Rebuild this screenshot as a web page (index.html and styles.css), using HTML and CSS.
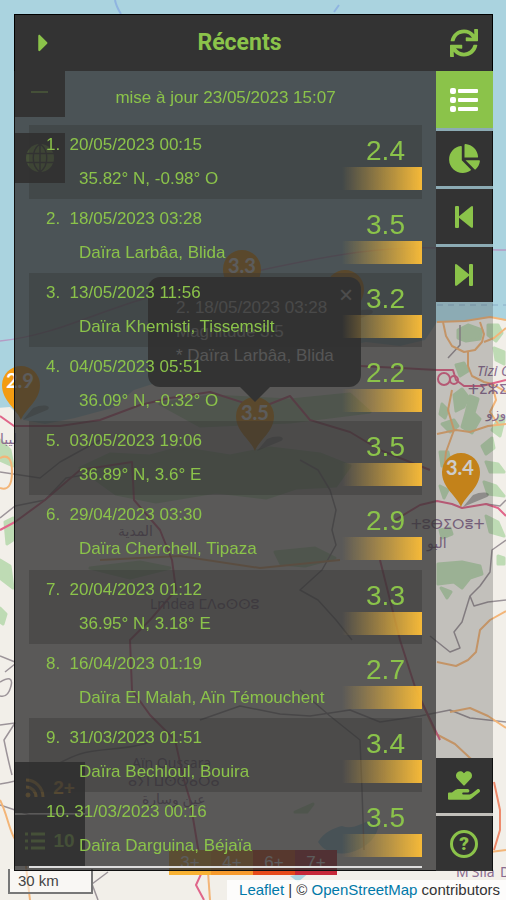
FILE: index.html
```html
<!DOCTYPE html>
<html lang="fr">
<head>
    <meta charset="UTF-8">
    <meta name="viewport" content="width=device-width, initial-scale=1.0">
    <title>Récents</title>
    <link rel="stylesheet" href="styles.css">
</head>
<body>
    <!-- Map background -->
    <div class="map">
        <svg class="map-canvas" viewBox="0 0 506 900" preserveAspectRatio="xMidYMid slice" aria-hidden="true">
            <defs>
                <g id="pin">
                    <path d="M2 0 L26 -10 C32 -14 22 -17 12 -12 Z" fill="#444" opacity=".4"/>
                    <path d="M0 0 C-4 -11 -19 -19 -19 -35 A19 19 0 0 1 19 -35 C19 -19 4 -11 0 0 Z" fill="#f39c12"/>
                </g>
            </defs>
            <rect width="506" height="900" fill="#aad3df"/>
            <path d="M-5 408 L10 407 L24 420 L45 424 L75 418 L112 408 L134 390 L165 380 L200 362 L260 347 L330 349 L366 342 L400 346 L425 340 L437 322 L465 321 L490 317 L511 322 V905 H-5 Z" fill="#f2efe9"/>

            <!-- Forests -->
            <g fill="#b5d8ab" stroke="#b5d8ab" stroke-width="3" stroke-linejoin="round" opacity=".85">
                <path d="M458 330 l10 -5 l14 5 l-2 9 l-14 2 l-8 -3z"/>
                <path d="M488 325 l10 0 l4 8 l-6 8 l-8 -6z"/>
                <path d="M494 348 l10 4 v12 l-8 -4z"/>
                <path d="M456 365 l8 -2 l4 8 l-8 5z"/>
                <path d="M454 395 l8 -6 l6 8 l-4 10 l-8 4z"/>
                <path d="M470 396 l8 3 l-4 14 l6 6 l-8 14 l-10 -6 l4 -14z"/>
                <path d="M442 404 l6 6 l-3 8 l-5 -4z"/>
                <path d="M442 424 l12 -4 l4 6 l-8 6z"/>
                <path d="M492 430 l8 -14 l4 4 l-4 16z"/>
                <path d="M482 446 l10 -8 l2 10 l-8 6z"/>
                <path d="M440 452 l8 0 l2 10 l-8 4z"/>
                <path d="M486 462 l12 2 l6 8 l-14 0z"/>
                <path d="M484 482 l12 4 l8 10 l-16 -2z"/>
                <path d="M440 486 l8 4 l-4 8z"/>
                <path d="M486 516 l12 6 l6 14 l-14 -4z"/>
                <path d="M440 530 l10 -2 l2 6 l-10 4z"/>
                <path d="M438 564 l24 -2 l18 4 l2 8 l-12 4 l-8 10 l-8 -6 l-16 2z"/>
                <path d="M441 588 l10 4 l-4 6z"/>
                <path d="M498 556 l6 2 v6 l-6 0z"/>
                <path d="M0 440 l10 10 l3 16 l-13 -6z"/>
                <path d="M5 522 l8 -4 l0 22 l-6 4z"/>
                <path d="M0 560 l10 6 l3 22 l-13 -10z"/>
                <path d="M0 608 l6 6 l-3 10 l-3 -2z"/>
                <path d="M80 468 l30 -14 l40 2 l30 -8 l50 8 l40 -8 l50 6 l30 12 l-14 20 l-40 2 l-30 10 l-50 -6 l-60 10 l-40 -8z"/>
                <path d="M160 404 l50 -8 l80 4 l60 -6 l20 18 l-80 10 l-90 4z"/>
                <path d="M275 552 l40 -4 l20 10 l-30 8 l-24 -2z"/>
                <path d="M90 568 l50 -6 l30 6 l-40 10z"/>
                <path d="M295 812 l18 -8 l-6 8z"/>
            </g>
            <path d="M318 842 C324 832 334 828 342 826 C352 830 362 824 378 816 C382 830 372 846 352 852 C338 856 324 852 318 842 Z" fill="#9ccbe0"/>
            <path d="M290 876 l20 -4 l-12 10z" fill="#aad3df"/>
            <path d="M115 0 q1 6 6 14 M334 12 l5 -7" fill="none" stroke="#8fb4e0" stroke-width="2"/>
            <path d="M437 305 H506" stroke="#8aaec8" stroke-dasharray="6 5"/>

            <!-- Borders and minor roads -->
            <g fill="none" stroke="#9c9499" stroke-width="1.5" stroke-linejoin="round">
                <path d="M0 341 C50 336 90 315 140 300 S300 260 360 252 S460 250 506 250" stroke="#b59bc4"/>
                <path d="M0 472 L40 478 L60 462 L100 440"/>
                <path d="M0 518 L15 506 L45 500 L66 478 L90 474"/>
                <path d="M506 540 L492 550 L490 572 L480 586 L470 596 L462 622 L454 632 L460 648 L450 652 L430 636"/>
                <path d="M470 596 L474 606 L488 602 L506 600"/>
                <path d="M300 460 L318 470 L330 490 L336 510 L332 530 L336 545 L322 570 L300 590 L318 600 L336 620 L352 640"/>
                <path d="M15 664 L5 672 M0 656 L15 662"/>
                <path d="M0 682 Q14 674 11 686 T0 696"/>
                <path d="M0 725 L15 723 L4 740 Q8 760 12 775"/>
                <path d="M0 784 C40 778 60 760 80 754 S130 750 150 742"/>
                <path d="M0 805 L30 815 L90 815"/>
                <path d="M200 720 L240 706 L280 714 L310 716 L350 710 L380 722 L420 716 L450 710 L470 718 L506 722"/>
                <path d="M300 690 L330 716 L360 740 L362 790 L364 850"/>
                <path d="M108 872 L92 884 L98 900"/>
                <path d="M460 325 L460 345 L448 358"/>
                <path d="M486 504 L500 506 L506 500"/>
            </g>

            <!-- Main roads -->
            <g fill="none" stroke="#f3b578" stroke-width="2" stroke-linejoin="round">
                <path d="M443 322 L446 336 L452 346 L464 352 L475 350 L482 342 L484 334 L480 322"/>
                <path d="M437 322 L465 321 L490 317 L506 320"/>
                <path d="M484 342 L494 338 L506 328"/>
                <path d="M468 352 L468 366 L472 376 L484 382 L492 384 L506 392"/>
                <path d="M437 434 L456 430 L470 432 L488 426 L506 424"/>
                <path d="M452 390 L448 410 L454 430 L446 452 L444 470"/>
                <path d="M492 384 L496 400 L490 412 L498 424"/>
                <path d="M437 662 L456 666 L468 660 L476 652 L480 630 L490 620 L506 611"/>
                <path d="M421 700 L436 734 L455 744 L470 758 L478 764"/>
                <path d="M450 712 L470 708 L488 716 L506 728"/>
                <path d="M0 458 Q12 452 12 472 T0 488"/>
                <path d="M0 800 C10 820 8 836 24 850 L30 900"/>
                <path d="M100 560 L180 556 L260 568 L340 560"/>
                <path d="M208 872 L210 900"/>
                <path d="M490 852 L506 850"/>
            </g>
            <g fill="none" stroke="#e0668a" stroke-width="2" stroke-linejoin="round">
                <path d="M0 416 L14 426 L60 426 L100 420 L140 405 L170 398 L210 392 L260 408 L290 396 L310 420 L350 432 L380 450 L430 470"/>
                <path d="M360 366 L400 368 L437 370 L453 370 L456 380 L464 386 L482 386 L506 380"/>
                <circle cx="444" cy="379" r="6"/>
                <circle cx="454" cy="380" r="4"/>
                <path d="M0 530 L15 522 L45 500 L80 470 L132 462 L134 500 L160 530 L172 560 L176 590 L150 620 L130 640 L132 690 L150 715 L175 740 L184 780 L190 800 L202 872 L196 885 L204 900"/>
                <path d="M395 520 L420 505 L437 501 L452 504 L462 508 L486 504 L498 508 L506 516"/>
                <path d="M380 560 L400 640 L416 690 L440 740"/>
                <path d="M494 782 L500 810 L500 830 L494 850" stroke="#ee8a6c"/>
            </g>

            <!-- Place names -->
            <g class="place">
                <text x="477" y="376" font-style="italic">Tizi Ouzou</text>
                <text x="468" y="394">ⵜⵉⵣⵉ ⵡⵓⵣⵓ</text>
                <text x="486" y="418">وزو</text>
                <text x="411" y="529">ⵜⵓⴱⵉⵔⴻⵜ</text>
                <text x="427" y="548">البو</text>
                <text x="118" y="536">المدية</text>
                <text x="150" y="609">Lmdea ⵎⴷⴰⵙⵙⵓ</text>
                <text x="132" y="768">Aïn Oussara</text>
                <text x="128" y="786">ⴰⵢⵏ ⵡⵙⵙⴰⵔⴰ</text>
                <text x="142" y="804">عين وسارة</text>
                <text x="456" y="877">M'Sila</text>
                <text x="500" y="877">D</text>
                <text x="0" y="444">ليبا</text>
            </g>

            <!-- Earthquakes -->
            <g class="pin-label">
                <use href="#pin" x="242" y="304"/><text x="242" y="273">3.3</text>
                <use href="#pin" x="345" y="324"/>
                <use href="#pin" x="21" y="420"/><text x="20" y="388">2.9</text>
                <use href="#pin" x="461" y="507"/><text x="460" y="475">3.4</text>
                <use href="#pin" x="255" y="451"/><text x="255" y="420">3.5</text>
            </g>
        </svg>

        <div class="map-tools">
            <button class="tool" aria-label="Zoom arrière">
                <svg width="18" height="18" viewBox="0 0 18 18"><path d="M0 9h17" stroke="currentColor" stroke-width="2"/></svg>
            </button>
            <button class="tool" aria-label="Fond de carte">
                <svg width="28" height="28" viewBox="0 0 28 28">
                    <circle cx="14" cy="14" r="14" fill="currentColor"/>
                    <path d="M0 9.500h28M0 18.500h28M14 0v28M14 0c-9 6-9 22 0 28M14 0c9 6 9 22 0 28" fill="none" stroke="#333" stroke-width="1.500"/>
                </svg>
            </button>
            <button class="tool tool-wide tool-feed">
                <svg width="20" height="20" viewBox="0 0 20 20" fill="none" stroke="currentColor" stroke-width="3">
                    <circle cx="3" cy="17" r="2" fill="currentColor" stroke-width="1"/>
                    <path d="M1 9a10 10 0 0 1 10 10M1 2a17 17 0 0 1 17 17"/>
                </svg>
                2+
            </button>
            <button class="tool tool-wide">
                <svg width="20" height="18" viewBox="0 0 20 18" stroke="currentColor" stroke-width="3"><path d="M0 2h3M6 2h14M0 9h3M6 9h14M0 16h3M6 16h14"/></svg>
                10
            </button>
        </div>

        <div class="popup">
            <button class="popup-close" aria-label="Fermer">×</button>
            <p>2. 18/05/2023 03:28</p>
            <p>Magnitude 3.5</p>
            <p>* Daïra Larbâa, Blida</p>
        </div>

        <div class="legend">
            <span class="mag-3">3+</span>
            <span class="mag-4">4+</span>
            <span class="mag-6">6+</span>
            <span class="mag-7">7+</span>
        </div>

        <div class="scale">30 km</div>
        <div class="attribution"><a href="#">Leaflet</a> | © <a href="#">OpenStreetMap</a> contributors</div>
    </div>

    <!-- Side panel -->
    <main class="panel">
        <header class="panel-header">
            <button class="icon-btn" aria-label="Replier">
                <svg width="11" height="28" viewBox="0 0 192 512" fill="currentColor"><path d="M0 384.662V127.338c0-17.818 21.543-26.741 34.142-14.142l128.662 128.662c7.810 7.810 7.810 20.474 0 28.284L34.142 398.804C21.543 411.404 0 402.480 0 384.662z"/></svg>
            </button>
            <h1>Récents</h1>
            <button class="icon-btn" aria-label="Actualiser">
                <svg width="28" height="28" viewBox="0 0 512 512" fill="currentColor"><path d="M440.65 12.57l4 82.77A247.16 247.16 0 0 0 255.83 8C134.73 8 33.91 94.92 12.29 209.82A12 12 0 0 0 24.09 224h49.05a12 12 0 0 0 11.67-9.26 175.91 175.91 0 0 1 317-56.94l-101.46-4.86a12 12 0 0 0-12.57 12v47.41a12 12 0 0 0 12 12H500a12 12 0 0 0 12-12V12a12 12 0 0 0-12-12h-47.37a12 12 0 0 0-11.98 12.57zM255.83 432a175.61 175.61 0 0 1-146-77.8l101.8 4.87a12 12 0 0 0 12.57-12v-47.4a12 12 0 0 0-12-12H12a12 12 0 0 0-12 12V500a12 12 0 0 0 12 12h47.35a12 12 0 0 0 12-12.6l-4.15-82.57A247.17 247.17 0 0 0 255.83 504c121.11 0 221.93-86.92 243.55-201.82a12 12 0 0 0-11.8-14.18h-49.05a12 12 0 0 0-11.67 9.26A175.86 175.86 0 0 1 255.83 432z"/></svg>
            </button>
        </header>

        <div class="panel-body">
            <section class="sheet">
                <p class="updated">mise à jour 23/05/2023 15:07</p>
                <ol class="quakes">
                    <li class="quake">
                        <div class="quake-info"><p>1.&nbsp; 20/05/2023 00:15</p><p class="quake-place">35.82° N, -0.98° O</p></div>
                        <div class="quake-mag">2.4</div>
                    </li>
                    <li class="quake">
                        <div class="quake-info"><p>2.&nbsp; 18/05/2023 03:28</p><p class="quake-place">Daïra Larbâa, Blida</p></div>
                        <div class="quake-mag">3.5</div>
                    </li>
                    <li class="quake">
                        <div class="quake-info"><p>3.&nbsp; 13/05/2023 11:56</p><p class="quake-place">Daïra Khemisti, Tissemsilt</p></div>
                        <div class="quake-mag">3.2</div>
                    </li>
                    <li class="quake">
                        <div class="quake-info"><p>4.&nbsp; 04/05/2023 05:51</p><p class="quake-place">36.09° N, -0.32° O</p></div>
                        <div class="quake-mag">2.2</div>
                    </li>
                    <li class="quake">
                        <div class="quake-info"><p>5.&nbsp; 03/05/2023 19:06</p><p class="quake-place">36.89° N, 3.6° E</p></div>
                        <div class="quake-mag">3.5</div>
                    </li>
                    <li class="quake">
                        <div class="quake-info"><p>6.&nbsp; 29/04/2023 03:30</p><p class="quake-place">Daïra Cherchell, Tipaza</p></div>
                        <div class="quake-mag">2.9</div>
                    </li>
                    <li class="quake">
                        <div class="quake-info"><p>7.&nbsp; 20/04/2023 01:12</p><p class="quake-place">36.95° N, 3.18° E</p></div>
                        <div class="quake-mag">3.3</div>
                    </li>
                    <li class="quake">
                        <div class="quake-info"><p>8.&nbsp; 16/04/2023 01:19</p><p class="quake-place">Daïra El Malah, Aïn Témouchent</p></div>
                        <div class="quake-mag">2.7</div>
                    </li>
                    <li class="quake">
                        <div class="quake-info"><p>9.&nbsp; 31/03/2023 01:51</p><p class="quake-place">Daïra Bechloul, Bouira</p></div>
                        <div class="quake-mag">3.4</div>
                    </li>
                    <li class="quake">
                        <div class="quake-info"><p>10. 31/03/2023 00:16</p><p class="quake-place">Daïra Darguina, Béjaïa</p></div>
                        <div class="quake-mag">3.5</div>
                    </li>
                </ol>
            </section>

            <nav class="rail">
                <button class="rail-btn active" aria-label="Liste">
                    <svg width="28" height="24" viewBox="0 0 28 24" fill="currentColor">
                        <rect width="6" height="6" rx="2"/><rect x="8" y="1" width="20" height="4" rx="1"/>
                        <rect y="9" width="6" height="6" rx="2"/><rect x="8" y="10" width="20" height="4" rx="1"/>
                        <rect y="18" width="6" height="6" rx="2"/><rect x="8" y="19" width="20" height="4" rx="1"/>
                    </svg>
                </button>
                <button class="rail-btn" aria-label="Statistiques">
                    <svg width="31" height="29" viewBox="0 0 544 512" fill="currentColor"><path d="M527.79 288H290.5l158.03 158.03c6.04 6.04 15.98 6.53 22.19.68 38.7-36.46 65.32-85.61 73.13-140.86 1.34-9.46-6.51-17.85-16.06-17.85zm-15.83-64.8C503.72 103.74 408.26 8.28 288.8.04 279.68-.59 272 7.1 272 16.24V240h223.77c9.14 0 16.82-7.68 16.19-16.8zM224 288V50.71c0-9.55-8.39-17.4-17.84-16.06C86.99 51.49-4.1 155.6.14 280.37 4.5 408.51 114.83 513.59 243.03 511.98c50.4-.63 96.97-16.87 135.26-44.03 7.9-5.6 8.42-17.23 1.57-24.08L224 288z"/></svg>
                </button>
                <button class="rail-btn" aria-label="Précédent">
                    <svg width="18" height="22" viewBox="0 0 18 22" fill="currentColor"><rect width="4" height="22" rx="1"/><path d="M16 .4 4 10.200q-1 .8 0 1.600L16 21.600q2 1 2-1V1.400q0-2-2-1z"/></svg>
                </button>
                <button class="rail-btn" aria-label="Suivant">
                    <svg width="18" height="22" viewBox="0 0 18 22" fill="currentColor"><rect x="14" width="4" height="22" rx="1"/><path d="M2 .4 14 10.200q1 .8 0 1.600L2 21.600q-2 1-2-1V1.400q0-2 2-1z"/></svg>
                </button>
                <button class="rail-btn rail-bottom" aria-label="Faire un don">
                    <svg width="32" height="29" viewBox="0 0 576 512" fill="currentColor"><path d="M275.3 250.5c7 7.4 18.4 7.4 25.5 0l108.9-114.2c31.6-33.2 29.8-88.2-5.6-118.8-30.8-26.7-76.7-21.9-104.9 7.7L288 36.9l-11.1-11.6C248.7-4.4 202.8-9.2 172 17.5c-35.3 30.6-37.2 85.6-5.6 118.8l108.9 114.2zm290 77.6c-11.8-10.7-30.2-10-42.6 0L430.3 402c-11.3 9.1-25.4 14-40 14H272c-8.8 0-16-7.2-16-16s7.2-16 16-16h78.3c15.9 0 30.7-10.9 33.3-26.6 3.3-20-12.1-37.4-31.6-37.4H192c-27 0-53.1 9.3-74.1 26.3L71.4 384H16c-8.8 0-16 7.2-16 16v96c0 8.8 7.2 16 16 16h356.8c14.5 0 28.6-4.9 40-14L564 377c15.2-12.1 16.4-35.3 1.3-48.9z"/></svg>
                </button>
                <button class="rail-btn" aria-label="Aide"><span class="help">?</span></button>
            </nav>
        </div>
    </main>
</body>
</html>
```

FILE: styles.css
```css
/* Reset some default styles */
* {
    margin: 0;
    padding: 0;
    box-sizing: border-box;
}

body {
    font-family: "Liberation Sans", Arial, sans-serif;
    font-size: 17px;
    line-height: 20px;
    color: #8bc34a;
}

button {
    border: none;
    background-color: #333;
    color: #8bc34a;
    font: inherit;
    cursor: pointer;
    display: flex;
    justify-content: center;
    align-items: center;
}

/* Map */
.map {
    position: fixed;
    inset: 0;
    overflow: hidden;
}

.map-canvas {
    position: absolute;
    width: 100%;
    height: 100%;
}

.place {
    fill: #8a6c90;
    font-family: "Noto Sans", "DejaVu Sans", sans-serif;
    font-size: 14px;
}

.pin-label {
    fill: #fff;
    font-family: Lato, sans-serif;
    font-size: 20px;
    font-weight: bold;
    text-anchor: middle;
}

/* Map buttons */
.map-tools {
    position: relative;
    height: 100%;
    padding: 67px 15px 34px;
    display: flex;
    flex-direction: column;
    align-items: flex-start;
    gap: 2px;
}

.tool {
    width: 50px;
    height: 50px;
    margin-bottom: 14px;
}

.tool-wide {
    width: 70px;
    height: 51px;
    margin-bottom: 0;
    gap: 8px;
    font-size: 19px;
    font-weight: bold;
}

.tool-feed {
    margin-top: auto;
    color: #e0a030;
}

/* Popup */
.popup {
    position: absolute;
    left: 148px;
    top: 277px;
    width: 213px;
    padding: 19px 12px 19px 28px;
    border-radius: 12px;
    background-color: #333;
    color: #ddd;
    line-height: 24px;
    white-space: nowrap;
}

.popup::after {
    content: "";
    position: absolute;
    left: 92px;
    top: 100%;
    border: 15px solid transparent;
    border-top-color: #333;
    border-bottom: none;
}

.popup-close {
    position: absolute;
    top: 6px;
    right: 8px;
    background: none;
    color: #fff;
    font-size: 24px;
}

/* Legend, scale and credits */
.legend {
    position: absolute;
    left: 169px;
    bottom: 25px;
    display: flex;
    color: #fff;
    text-align: center;
}

.legend span {
    width: 42px;
    line-height: 25px;
}

.mag-3 { background-color: #f9b233; }
.mag-4 { background-color: #f79a2c; }
.mag-6 { background-color: #e64a19; }
.mag-7 { background-color: #c62839; }

.scale {
    position: absolute;
    left: 8px;
    bottom: 6px;
    width: 85px;
    padding: 2px 8px 1px;
    border: 2px solid #777;
    border-top: none;
    background-color: rgba(255, 255, 255, 0.5);
    color: #444;
    font-size: 15px;
}

.attribution {
    position: absolute;
    right: 0;
    bottom: 0;
    padding: 0 6px 0 12px;
    background-color: rgba(255, 255, 255, 0.8);
    color: #333;
    font-size: 15px;
}

.attribution a {
    color: #0078a8;
    text-decoration: none;
}

/* Panel */
.panel {
    position: relative;
    min-height: 100vh;
    padding: 14px 13px 29px 14px;
    display: flex;
    flex-direction: column;
}

.panel-header {
    height: 57px;
    display: flex;
    align-items: center;
    border: 1px solid #000;
    border-bottom: none;
    background-color: #333;
}

.panel-header h1 {
    flex: 1;
    padding-right: 28px;
    font-family: Roboto, sans-serif;
    font-size: 23px;
    text-align: center;
}

.icon-btn {
    width: 56px;
    height: 56px;
}

.panel-body {
    flex: 1;
    display: flex;
}

/* List of earthquakes */
.sheet {
    flex: 1;
    padding: 0 14px 2px;
    display: flex;
    flex-direction: column;
    border: 1px solid #111;
    border-top: none;
    border-right: none;
    background-color: rgba(51, 51, 51, 0.8);
}

.updated {
    padding: 17px 0;
    text-align: center;
}

.quakes {
    flex: 1;
    display: grid;
    grid-auto-rows: 1fr;
    list-style: none;
    border-bottom: 2px solid #ddd;
}

.quake {
    padding: 10px 0 8px 17px;
    display: flex;
    justify-content: space-between;
}

.quake:nth-child(odd) {
    background-color: rgba(51, 51, 51, 0.35);
}

.quake-info {
    display: flex;
    flex-direction: column;
    gap: 14px;
    white-space: nowrap;
}

.quake-place {
    padding-left: 33px;
}

.quake-mag {
    width: 80px;
    padding-left: 7px;
    font-size: 28px;
    line-height: 32px;
    text-align: center;
}

/* Colour bar under the magnitude */
.quake-mag::after {
    content: "";
    display: block;
    height: 23px;
    margin-left: -7px;
    background: linear-gradient(to right, rgba(245, 185, 56, 0), #f5b938);
}

/* Right buttons */
.rail {
    width: 57px;
    display: flex;
    flex-direction: column;
    gap: 3px;
    background-color: rgba(51, 51, 51, 0.25);
}

.rail-btn {
    height: 55px;
    border-right: 1px solid #111;
}

.rail-btn.active {
    height: 57px;
    border-color: #8bc34a;
    background-color: #8bc34a;
    color: #fff;
}

.rail-bottom {
    margin-top: auto;
}

.help {
    width: 28px;
    height: 28px;
    border: 3px solid #8bc34a;
    border-radius: 50%;
    font-family: Roboto, sans-serif;
    font-size: 19px;
    font-weight: 900;
    line-height: 22px;
}
```
